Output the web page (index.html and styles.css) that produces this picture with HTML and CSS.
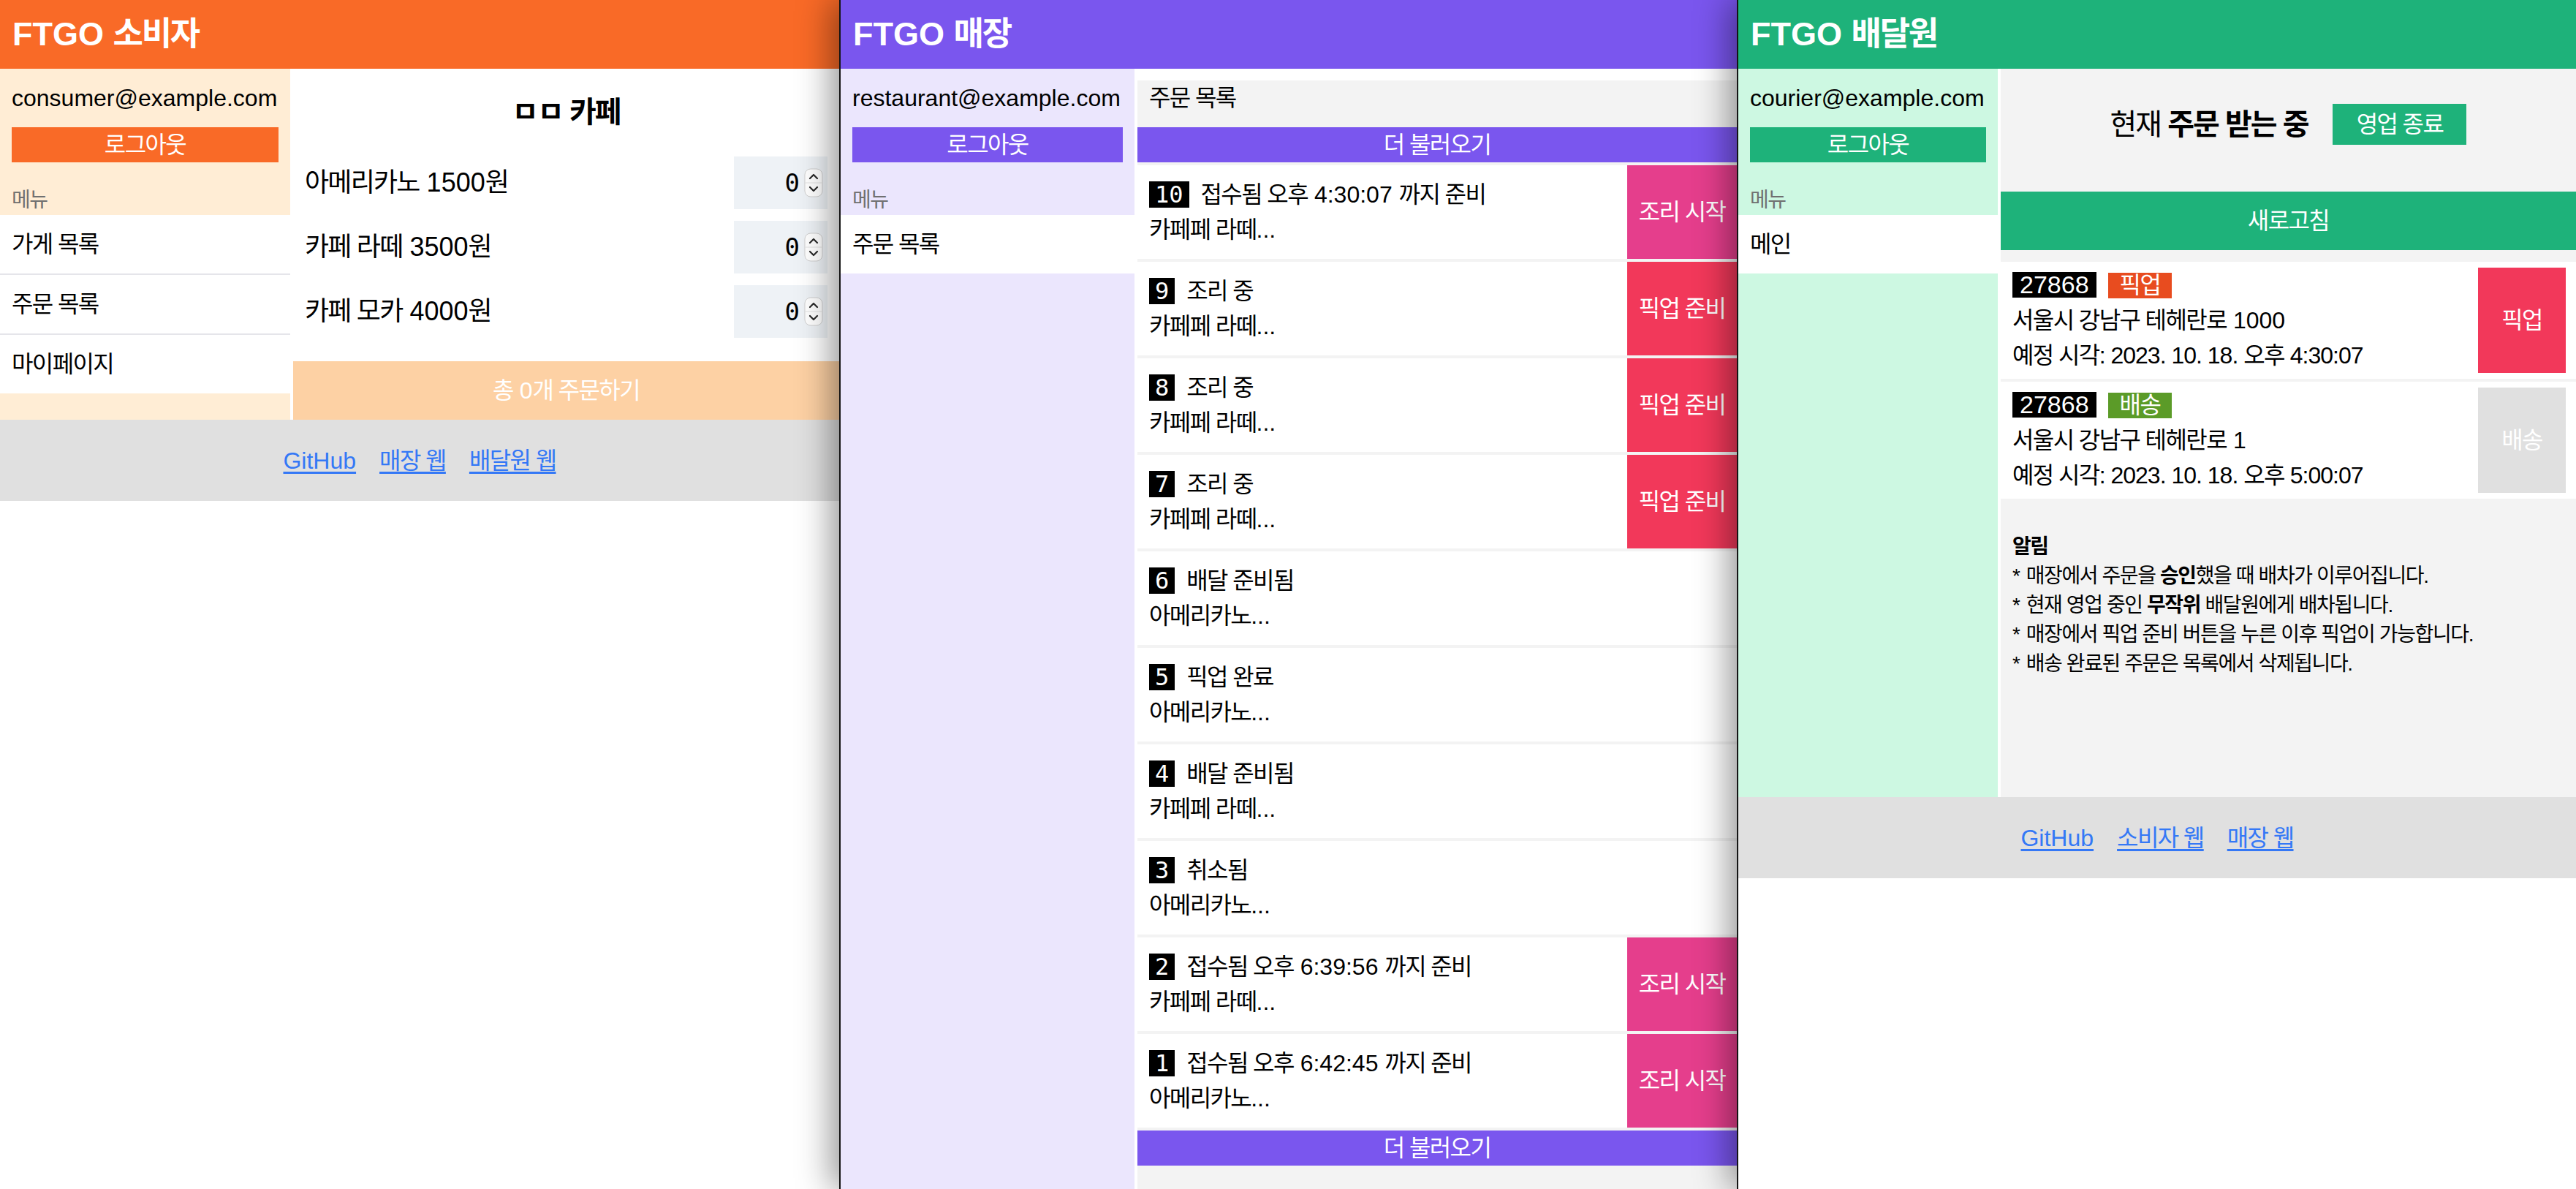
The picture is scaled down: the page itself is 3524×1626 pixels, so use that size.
FILE: index.html
```html
<!DOCTYPE html>
<html lang="ko">
<head>
<meta charset="utf-8">
<title>FTGO</title>
<link rel="stylesheet" href="styles.css">
</head>
<body>

<!-- 소비자 -->
<div class="win w1">
  <header class="hd hd-orange"><h1>FTGO <span class="k">소비자</span></h1></header>
  <div class="app">
    <aside class="side side-c">
      <div class="side-top">
        <div class="email">consumer@example.com</div>
        <button class="logout bg-orange"><span class="k">로그아웃</span></button>
        <div class="menu-label"><span class="k">메뉴</span></div>
      </div>
      <nav class="menu">
        <a class="menu-item"><span class="k">가게 목록</span></a>
        <a class="menu-item"><span class="k">주문 목록</span></a>
        <a class="menu-item"><span class="k">마이페이지</span></a>
      </nav>
    </aside>
    <main class="c-main">
      <h2 class="c-title"><span class="k">ㅁㅁ 카페</span></h2>
      <div class="rows">
        <div class="row">
          <span class="row-name"><span class="k">아메리카노</span> 1500<span class="k">원</span></span>
          <div class="qty"><span class="qty-val">0</span><svg class="spin" width="26" height="40" viewBox="0 0 26 40"><rect x="1" y="1" width="24" height="38" rx="8" fill="#fff" stroke="#cfcfcf"/><line x1="1" y1="20" x2="25" y2="20" stroke="#e2e2e2"/><polyline points="8,14 13,9 18,14" fill="none" stroke="#2a2a2a" stroke-width="2.2" stroke-linecap="round" stroke-linejoin="round"/><polyline points="8,26 13,31 18,26" fill="none" stroke="#2a2a2a" stroke-width="2.2" stroke-linecap="round" stroke-linejoin="round"/></svg></div>
        </div>
        <div class="row">
          <span class="row-name"><span class="k">카페 라떼</span> 3500<span class="k">원</span></span>
          <div class="qty"><span class="qty-val">0</span><svg class="spin" width="26" height="40" viewBox="0 0 26 40"><rect x="1" y="1" width="24" height="38" rx="8" fill="#fff" stroke="#cfcfcf"/><line x1="1" y1="20" x2="25" y2="20" stroke="#e2e2e2"/><polyline points="8,14 13,9 18,14" fill="none" stroke="#2a2a2a" stroke-width="2.2" stroke-linecap="round" stroke-linejoin="round"/><polyline points="8,26 13,31 18,26" fill="none" stroke="#2a2a2a" stroke-width="2.2" stroke-linecap="round" stroke-linejoin="round"/></svg></div>
        </div>
        <div class="row">
          <span class="row-name"><span class="k">카페 모카</span> 4000<span class="k">원</span></span>
          <div class="qty"><span class="qty-val">0</span><svg class="spin" width="26" height="40" viewBox="0 0 26 40"><rect x="1" y="1" width="24" height="38" rx="8" fill="#fff" stroke="#cfcfcf"/><line x1="1" y1="20" x2="25" y2="20" stroke="#e2e2e2"/><polyline points="8,14 13,9 18,14" fill="none" stroke="#2a2a2a" stroke-width="2.2" stroke-linecap="round" stroke-linejoin="round"/><polyline points="8,26 13,31 18,26" fill="none" stroke="#2a2a2a" stroke-width="2.2" stroke-linecap="round" stroke-linejoin="round"/></svg></div>
        </div>
      </div>
      <button class="order-btn"><span class="k">총</span> 0<span class="k">개 주문하기</span></button>
    </main>
  </div>
  <footer class="ft">
    <a class="lnk">GitHub</a>
    <a class="lnk"><span class="k">매장 웹</span></a>
    <a class="lnk"><span class="k">배달원 웹</span></a>
  </footer>
</div>

<!-- 매장 -->
<div class="win w2">
  <header class="hd hd-purple"><h1>FTGO <span class="k">매장</span></h1></header>
  <div class="app app-r">
    <aside class="side side-r">
      <div class="side-top">
        <div class="email">restaurant@example.com</div>
        <button class="logout bg-purple"><span class="k">로그아웃</span></button>
        <div class="menu-label"><span class="k">메뉴</span></div>
      </div>
      <nav class="menu">
        <a class="menu-item"><span class="k">주문 목록</span></a>
      </nav>
    </aside>
    <main class="r-main">
      <section class="r-sec">
        <h2 class="r-title"><span class="k">주문 목록</span></h2>
        <button class="more bg-purple"><span class="k">더 불러오기</span></button>
        <ul class="orders">
          <li class="oi"><div class="oi-body"><div class="oi-line"><span class="num">10</span><span class="k">접수됨 오후</span> 4:30:07 <span class="k">까지 준비</span></div><div class="oi-line"><span class="k">카페페 라떼</span>...</div></div><div class="oi-btn bg-pink"><span class="k">조리 시작</span></div></li>
          <li class="oi"><div class="oi-body"><div class="oi-line"><span class="num">9</span><span class="k">조리 중</span></div><div class="oi-line"><span class="k">카페페 라떼</span>...</div></div><div class="oi-btn bg-red"><span class="k">픽업 준비</span></div></li>
          <li class="oi"><div class="oi-body"><div class="oi-line"><span class="num">8</span><span class="k">조리 중</span></div><div class="oi-line"><span class="k">카페페 라떼</span>...</div></div><div class="oi-btn bg-red"><span class="k">픽업 준비</span></div></li>
          <li class="oi"><div class="oi-body"><div class="oi-line"><span class="num">7</span><span class="k">조리 중</span></div><div class="oi-line"><span class="k">카페페 라떼</span>...</div></div><div class="oi-btn bg-red"><span class="k">픽업 준비</span></div></li>
          <li class="oi"><div class="oi-body"><div class="oi-line"><span class="num">6</span><span class="k">배달 준비됨</span></div><div class="oi-line"><span class="k">아메리카노</span>...</div></div></li>
          <li class="oi"><div class="oi-body"><div class="oi-line"><span class="num">5</span><span class="k">픽업 완료</span></div><div class="oi-line"><span class="k">아메리카노</span>...</div></div></li>
          <li class="oi"><div class="oi-body"><div class="oi-line"><span class="num">4</span><span class="k">배달 준비됨</span></div><div class="oi-line"><span class="k">카페페 라떼</span>...</div></div></li>
          <li class="oi"><div class="oi-body"><div class="oi-line"><span class="num">3</span><span class="k">취소됨</span></div><div class="oi-line"><span class="k">아메리카노</span>...</div></div></li>
          <li class="oi"><div class="oi-body"><div class="oi-line"><span class="num">2</span><span class="k">접수됨 오후</span> 6:39:56 <span class="k">까지 준비</span></div><div class="oi-line"><span class="k">카페페 라떼</span>...</div></div><div class="oi-btn bg-pink"><span class="k">조리 시작</span></div></li>
          <li class="oi"><div class="oi-body"><div class="oi-line"><span class="num">1</span><span class="k">접수됨 오후</span> 6:42:45 <span class="k">까지 준비</span></div><div class="oi-line"><span class="k">아메리카노</span>...</div></div><div class="oi-btn bg-pink"><span class="k">조리 시작</span></div></li>
        </ul>
        <button class="more bg-purple"><span class="k">더 불러오기</span></button>
      </section>
    </main>
  </div>
</div>

<!-- 배달원 -->
<div class="win w3">
  <header class="hd hd-green"><h1>FTGO <span class="k">배달원</span></h1></header>
  <div class="app">
    <aside class="side side-d">
      <div class="side-top">
        <div class="email">courier@example.com</div>
        <button class="logout bg-green"><span class="k">로그아웃</span></button>
        <div class="menu-label"><span class="k">메뉴</span></div>
      </div>
      <nav class="menu">
        <a class="menu-item"><span class="k">메인</span></a>
      </nav>
    </aside>
    <main class="d-main">
      <div class="status">
        <span class="status-text"><span class="k">현재 <b>주문 받는 중</b></span></span>
        <button class="status-btn bg-green"><span class="k">영업 종료</span></button>
      </div>
      <button class="refresh bg-green"><span class="k">새로고침</span></button>
      <div class="d-list">
        <div class="di">
          <div class="di-body">
            <div class="di-line"><span class="code">27868</span><span class="tag tag-pick"><span class="k">픽업</span></span></div>
            <div class="di-line"><span class="k">서울시 강남구 테헤란로</span> 1000</div>
            <div class="di-line"><span class="k">예정 시각</span><span class="dt">: 2023. 10. 18. </span><span class="k">오후</span><span class="dt"> 4:30:07</span></div>
          </div>
          <div class="di-btn bg-red"><span class="k">픽업</span></div>
        </div>
        <div class="di">
          <div class="di-body">
            <div class="di-line"><span class="code">27868</span><span class="tag tag-deliver"><span class="k">배송</span></span></div>
            <div class="di-line"><span class="k">서울시 강남구 테헤란로</span> 1</div>
            <div class="di-line"><span class="k">예정 시각</span><span class="dt">: 2023. 10. 18. </span><span class="k">오후</span><span class="dt"> 5:00:07</span></div>
          </div>
          <div class="di-btn bg-disabled"><span class="k">배송</span></div>
        </div>
      </div>
      <div class="notice">
        <p class="notice-title"><span class="k"><b>알림</b></span></p>
        <p>* <span class="k">매장에서 주문을 <b>승인</b>했을 때 배차가 이루어집니다.</span></p>
        <p>* <span class="k">현재 영업 중인 <b>무작위</b> 배달원에게 배차됩니다.</span></p>
        <p>* <span class="k">매장에서 픽업 준비 버튼을 누른 이후 픽업이 가능합니다.</span></p>
        <p>* <span class="k">배송 완료된 주문은 목록에서 삭제됩니다.</span></p>
      </div>
    </main>
  </div>
  <footer class="ft">
    <a class="lnk">GitHub</a>
    <a class="lnk"><span class="k">소비자 웹</span></a>
    <a class="lnk"><span class="k">매장 웹</span></a>
  </footer>
</div>

</body>
</html>
```

FILE: styles.css
```css
* {
  box-sizing: border-box;
  margin: 0;
  padding: 0;
}

html,
body {
  width: 3524px;
  height: 1626px;
  overflow: hidden;
  background: #ffffff;
}

body {
  display: flex;
  font-family: "Liberation Sans", "Noto Sans CJK KR", sans-serif;
  font-size: 32px;
  line-height: 48px;
  color: #000000;
}

/* Korean runs: slightly tightened to match the original Hangul face */
.k {
  font-size: 1em;
  letter-spacing: -0.05em;
  line-height: 1;
}

button {
  font: inherit;
  border: 0;
  color: #ffffff;
  display: block;
  cursor: pointer;
}

a {
  color: inherit;
  text-decoration: none;
}

/* colours */
.bg-orange { background: #f96a27; }
.bg-purple { background: #7a56ee; }
.bg-green { background: #1eb27a; }
.bg-pink { background: #e53e8c; }
.bg-red { background: #f2385a; }
.bg-disabled { background: #e0e0e0; }

/* windows */
.win {
  position: relative;
  flex: none;
  height: 1626px;
  overflow: hidden;
  background: #ffffff;
  display: flex;
  flex-direction: column;
}

.w1 {
  width: 1148px;
  z-index: 1;
}

.w2 {
  width: 1228px;
  z-index: 2;
  border-left: 2px solid #141414;
  box-shadow: -10px 0 44px rgba(0, 0, 0, 0.42);
}

.w3 {
  width: 1148px;
  z-index: 3;
  border-left: 2px solid #141414;
  box-shadow: -10px 0 44px rgba(0, 0, 0, 0.42);
}

/* header */
.hd {
  flex: none;
  height: 94px;
  display: flex;
  align-items: center;
  padding-left: 17px;
  color: #ffffff;
}

.hd h1 {
  font-size: 45px;
  font-weight: 700;
  line-height: 56px;
}

.hd-orange { background: #f96a27; }
.hd-purple { background: #7a56ee; }
.hd-green { background: #1eb27a; }

/* layout */
.app {
  display: flex;
  gap: 4px;
  flex: none;
}

.app-r {
  flex: 1;
}

.side {
  flex: none;
  display: flex;
  flex-direction: column;
}

.side-c { width: 397px; background: #ffedd5; }
.side-r { width: 402px; background: #ebe6fd; }
.side-d { width: 355px; background: #cdf8e2; }

.side-top {
  padding: 16px 16px 0;
}

.email {
  line-height: 48px;
  white-space: nowrap;
}

.logout {
  width: 100%;
  height: 48px;
  margin-top: 16px;
  line-height: 48px;
  text-align: center;
}

.menu-label {
  margin-top: 32px;
  font-size: 28px;
  line-height: 40px;
  color: #707070;
}

.menu {
  background: #ffffff;
}

.menu-item {
  display: block;
  line-height: 80px;
  padding-left: 16px;
}

.menu-item + .menu-item {
  border-top: 2px solid #e5e5ea;
}

/* consumer main */
.c-main {
  flex: 1;
  display: flex;
  flex-direction: column;
}

.c-title {
  margin-top: 31px;
  line-height: 56px;
  font-size: 40px;
  font-weight: 700;
  text-align: center;
}

.rows {
  margin-top: 25px;
  padding: 0 16px;
}

.row {
  height: 88px;
  display: flex;
  align-items: center;
  justify-content: space-between;
  font-size: 36px;
}

.qty {
  width: 128px;
  height: 72px;
  background: #eef2f6;
  display: flex;
  align-items: center;
  justify-content: flex-end;
  gap: 6px;
  padding-right: 6px;
}

.qty-val {
  font-family: "DejaVu Sans Mono", "Liberation Mono", monospace;
  font-size: 34px;
  line-height: 40px;
}

.spin {
  display: block;
}

.order-btn {
  width: 100%;
  height: 80px;
  margin-top: 24px;
  line-height: 80px;
  background: #fdd1a4;
  text-align: center;
}

/* footer */
.ft {
  flex: none;
  height: 111px;
  background: #e0e0e0;
  display: flex;
  align-items: center;
  justify-content: center;
  gap: 32px;
}

.lnk {
  color: #3478f6;
  text-decoration: underline;
  text-underline-offset: 4px;
  line-height: 48px;
}

/* restaurant main */
.r-main {
  flex: 1;
  padding-top: 16px;
  background: #ffffff;
}

.r-sec {
  background: #f3f3f3;
  padding-bottom: 300px;
}

.r-title {
  font-size: 32px;
  font-weight: 400;
  line-height: 48px;
  padding: 0 16px 16px;
}

.more {
  width: 100%;
  height: 48px;
  line-height: 48px;
  text-align: center;
}

.orders {
  list-style: none;
  padding: 4px 0;
  display: flex;
  flex-direction: column;
  gap: 4px;
}

.oi {
  height: 128px;
  background: #ffffff;
  display: flex;
}

.oi-body {
  flex: 1;
  padding: 16px;
}

.oi-line {
  line-height: 48px;
  white-space: nowrap;
}

.num {
  display: inline-block;
  background: #000000;
  color: #ffffff;
  font-family: "DejaVu Sans Mono", "Liberation Mono", monospace;
  font-size: 32px;
  line-height: 36px;
  padding: 0 8px;
  margin-right: 16px;
}

.oi-btn {
  flex: none;
  width: 150px;
  display: flex;
  align-items: center;
  justify-content: center;
  color: #ffffff;
}

/* courier main */
.d-main {
  flex: 1;
  background: #f3f3f3;
}

.status {
  height: 168px;
  padding-bottom: 16px;
  display: flex;
  align-items: center;
  justify-content: center;
  gap: 34px;
}

.status-text {
  font-size: 40px;
  line-height: 56px;
}

.status-btn {
  width: 183px;
  height: 56px;
  line-height: 56px;
  text-align: center;
}

.refresh {
  width: 100%;
  height: 80px;
  line-height: 80px;
  text-align: center;
}

.d-list {
  padding-top: 16px;
  display: flex;
  flex-direction: column;
  gap: 4px;
}

.di {
  height: 160px;
  background: #ffffff;
  display: flex;
  align-items: center;
  padding: 8px 14px 8px 16px;
}

.di-body {
  flex: 1;
}

.di-line {
  line-height: 48px;
  white-space: nowrap;
}

.dt {
  letter-spacing: -1px;
}

.code {
  display: inline-block;
  background: #000000;
  color: #ffffff;
  font-size: 34px;
  line-height: 35px;
  padding: 0 10px;
}

.tag {
  display: inline-block;
  color: #ffffff;
  line-height: 35px;
  padding: 0 16px;
  margin-left: 16px;
}

.tag-pick { background: #e84c1f; }
.tag-deliver { background: #5b9b28; }

.di-btn {
  flex: none;
  width: 120px;
  height: 144px;
  display: flex;
  align-items: center;
  justify-content: center;
  color: #ffffff;
}

.notice {
  height: 408px;
  padding: 46px 16px 0;
  font-size: 28px;
  line-height: 40px;
}
```
